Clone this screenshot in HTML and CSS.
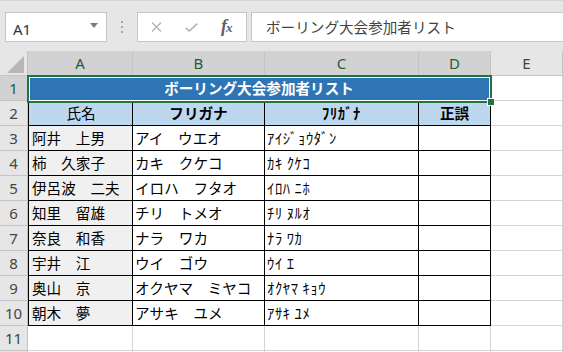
FILE: index.html
```html
<!DOCTYPE html>
<html lang="ja">
<head>
<meta charset="utf-8">
<title>ボーリング大会参加者リスト</title>
<link rel="stylesheet" href="styles.css">
</head>
<body>
<div class="app">
  <div class="toolbar">
    <div class="namebox">
      <span class="nb-text">A1</span>
      <svg class="nb-arrow" width="8" height="5" viewBox="0 0 8 5"><polygon points="0,0 8,0 4,5" fill="#7b7b88"/></svg>
    </div>
    <div class="grip">
      <svg width="3" height="12" viewBox="0 0 3 12"><rect x="0" y="0" width="2" height="2" fill="#a6a6a6"/><rect x="0" y="5" width="2" height="2" fill="#a6a6a6"/><rect x="0" y="10" width="2" height="2" fill="#a6a6a6"/></svg>
    </div>
    <div class="fxbox">
      <svg class="ico" width="11" height="10" viewBox="0 0 11 10"><path d="M1 0.5 L10 9.5 M10 0.5 L1 9.5" stroke="#b3b3b3" stroke-width="1.4" fill="none"/></svg>
      <svg class="ico" width="13" height="9" viewBox="0 0 13 9"><path d="M0.8 4.8 L4.3 8 L12.3 0.6" stroke="#b3b3b3" stroke-width="1.6" fill="none"/></svg>
      <span class="fx"><i>f</i><i class="x">x</i></span>
    </div>
    <div class="formula">ボーリング大会参加者リスト</div>
  </div>

  <div class="sheet">
    <div class="hd corner"><svg width="17" height="17" viewBox="0 0 17 17"><polygon points="17,0 17,17 0,17" fill="#b7b7b7"/></svg></div>
    <div class="hd col sel">A</div>
    <div class="hd col sel">B</div>
    <div class="hd col sel">C</div>
    <div class="hd col sel">D</div>
    <div class="hd col">E</div>

    <div class="hd row sel">1</div>
    <div class="c title">ボーリング大会参加者リスト</div>
    <div class="c"></div>

    <div class="hd row">2</div>
    <div class="c tb first head center">氏名</div>
    <div class="c tb head center bold">フリガナ</div>
    <div class="c tb head center bold half">ﾌﾘｶﾞﾅ</div>
    <div class="c tb head center bold">正誤</div>
    <div class="c"></div>

    <div class="hd row">3</div>
    <div class="c tb first name">阿井　上男</div>
    <div class="c tb">アイ　ウエオ</div>
    <div class="c tb half">ｱｲｼﾞｮｳﾀﾞﾝ</div>
    <div class="c tb"></div>
    <div class="c"></div>

    <div class="hd row">4</div>
    <div class="c tb first name">柿　久家子</div>
    <div class="c tb">カキ　クケコ</div>
    <div class="c tb half">ｶｷ ｸｹｺ</div>
    <div class="c tb"></div>
    <div class="c"></div>

    <div class="hd row">5</div>
    <div class="c tb first name">伊呂波　二夫</div>
    <div class="c tb">イロハ　フタオ</div>
    <div class="c tb half">ｲﾛﾊ ﾆﾎ</div>
    <div class="c tb"></div>
    <div class="c"></div>

    <div class="hd row">6</div>
    <div class="c tb first name">知里　留雄</div>
    <div class="c tb">チリ　トメオ</div>
    <div class="c tb half">ﾁﾘ ﾇﾙｵ</div>
    <div class="c tb"></div>
    <div class="c"></div>

    <div class="hd row">7</div>
    <div class="c tb first name">奈良　和香</div>
    <div class="c tb">ナラ　ワカ</div>
    <div class="c tb half">ﾅﾗ ﾜｶ</div>
    <div class="c tb"></div>
    <div class="c"></div>

    <div class="hd row">8</div>
    <div class="c tb first name">宇井　江</div>
    <div class="c tb">ウイ　ゴウ</div>
    <div class="c tb half">ｳｲ ｴ</div>
    <div class="c tb"></div>
    <div class="c"></div>

    <div class="hd row">9</div>
    <div class="c tb first name">奥山　京</div>
    <div class="c tb">オクヤマ　ミヤコ</div>
    <div class="c tb half">ｵｸﾔﾏ ｷｮｳ</div>
    <div class="c tb"></div>
    <div class="c"></div>

    <div class="hd row">10</div>
    <div class="c tb first name">朝木　夢</div>
    <div class="c tb">アサキ　ユメ</div>
    <div class="c tb half">ｱｻｷ ﾕﾒ</div>
    <div class="c tb"></div>
    <div class="c"></div>

    <div class="hd row">11</div>
    <div class="c"></div>
    <div class="c"></div>
    <div class="c"></div>
    <div class="c"></div>
    <div class="c"></div>

    <div class="hd row"></div>
    <div class="c"></div>
    <div class="c"></div>
    <div class="c"></div>
    <div class="c"></div>
    <div class="c"></div>
  </div>

  <div class="selection"><span class="handle"></span></div>
</div>
</body>
</html>
```

FILE: styles.css
```css
html, body {
  margin: 0;
  padding: 0;
  background: #ffffff;
}

.app {
  position: relative;
  width: 563px;
  height: 352px;
  overflow: hidden;
  font-family: "Noto Sans CJK JP", "Noto Sans", sans-serif;
  color: #000;
}

/* ---------- formula toolbar ---------- */
.toolbar {
  height: 51px;
  box-sizing: border-box;
  background: #e6e6e6;
  border-top: 1px solid #d6d6d6;
  padding-top: 11px;
  display: flex;
  align-items: flex-start;
  overflow: hidden;
}

.namebox {
  margin-left: 5px;
  width: 102px;
  height: 30px;
  box-sizing: border-box;
  background: #fff;
  border: 1px solid #c6c6c6;
  display: flex;
  align-items: center;
  justify-content: space-between;
  padding: 0 8px 0 7px;
}

.nb-text {
  font-family: "Noto Sans", sans-serif;
  font-size: 15px;
  color: #333;
  padding-top: 3px;
}

.nb-arrow {
  margin-bottom: 3px;
}

.grip {
  width: 30px;
  height: 30px;
  display: flex;
  align-items: center;
  justify-content: center;
}

.fxbox {
  width: 110px;
  height: 30px;
  box-sizing: border-box;
  background: #fff;
  border: 1px solid #c6c6c6;
  display: flex;
  align-items: center;
  padding-left: 13px;
  gap: 23px;
}

.fx {
  font-family: "Liberation Serif", serif;
  font-size: 18px;
  font-weight: 700;
  color: #5e5e72;
  letter-spacing: -1px;
  line-height: 18px;
}

.fx .x {
  font-size: 13px;
}

.formula {
  margin-left: 4px;
  flex: 1;
  margin-right: -4px;
  height: 30px;
  box-sizing: border-box;
  background: #fff;
  border: 1px solid #c6c6c6;
  padding-left: 14px;
  font-size: 14.6px;
  line-height: 28px;
  color: #444;
  white-space: nowrap;
}

/* ---------- sheet grid ---------- */
.sheet {
  display: grid;
  grid-template-columns: 28px 105px 132px 154px 72px 72px;
  grid-auto-rows: 25px;
}

.hd {
  background: #e6e6e6;
  border-right: 1px solid #c4c4c4;
  border-bottom: 1px solid #c4c4c4;
  box-sizing: border-box;
  display: flex;
  align-items: center;
  justify-content: center;
  font-family: "Noto Sans", sans-serif;
  font-size: 15px;
  color: #444;
}

.hd.sel {
  background: #d2d2d2;
  color: #1f5c3a;
}

.hd.corner {
  align-items: flex-end;
  justify-content: flex-end;
  padding: 0 3px 2px 0;
}

.c {
  border-right: 1px solid #d4d4d4;
  border-bottom: 1px solid #d4d4d4;
  box-sizing: border-box;
  padding: 0 2px;
  font-size: 14.6px;
  line-height: 24px;
  white-space: nowrap;
  overflow: hidden;
}

.c.tb {
  border-right-color: #000;
  border-bottom-color: #000;
}

.c.first {
  border-left: 1px solid #000;
  padding-left: 3px;
}

.c.name {
  background: #f0f0f0;
}

.c.head {
  background: #bdd7ee;
}

.center {
  text-align: center;
}

.bold {
  font-weight: 700;
}

.half {
  letter-spacing: 0.6px;
}

.c.title {
  grid-column: span 4;
  background: #2e75b6;
  color: #fff;
  font-weight: 700;
  text-align: center;
  border-bottom-color: #000;
  border-right-color: #000;
}

/* ---------- active cell selection ---------- */
.selection {
  position: absolute;
  left: 27px;
  top: 75px;
  width: 465px;
  height: 28px;
  box-sizing: border-box;
  border: 2px solid #217346;
  box-shadow: inset 0 0 0 1px #fff;
  pointer-events: none;
}

.handle {
  position: absolute;
  right: -4px;
  bottom: -4px;
  width: 6px;
  height: 6px;
  background: #217346;
  outline: 1px solid #fff;
}
```
